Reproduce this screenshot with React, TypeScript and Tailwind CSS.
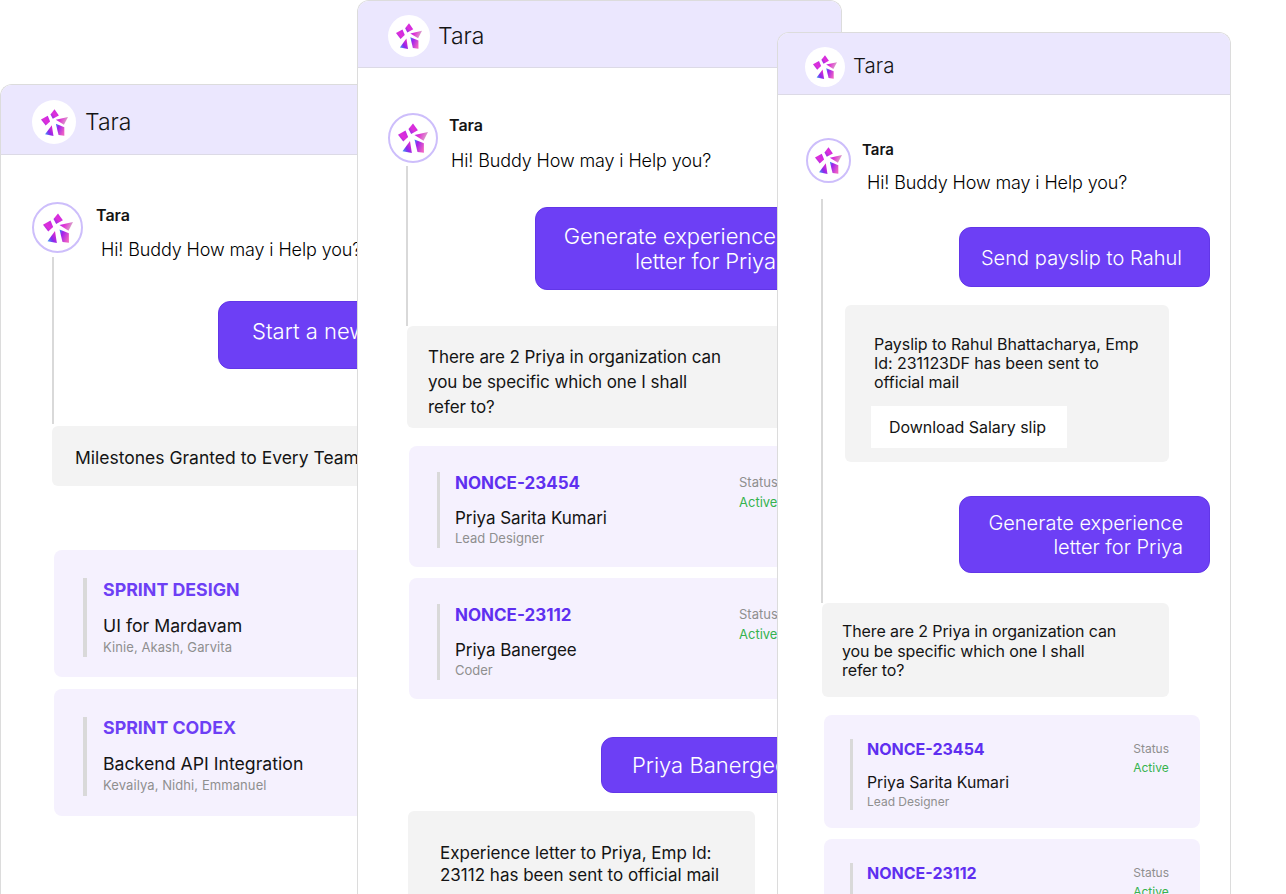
import { useId } from 'react';

function Logo({ size }: { size: number }) {
  const id = useId();
  return (
    <svg width={size} height={size} viewBox="0 0 80 80" fill="none">
      <defs>
        <linearGradient id={id + 'a'} x1="0" y1="0" x2="1" y2="0.3">
          <stop offset="0" stopColor="#a81ef0" />
          <stop offset="0.45" stopColor="#e236d4" />
          <stop offset="1" stopColor="#d8aac8" />
        </linearGradient>
        <linearGradient id={id + 'b'} x1="0" y1="1" x2="1" y2="0.2">
          <stop offset="0" stopColor="#22bdf6" />
          <stop offset="0.45" stopColor="#8a28ee" />
          <stop offset="1" stopColor="#f02cc8" />
        </linearGradient>
        <linearGradient id={id + 'c'} x1="0" y1="0" x2="1" y2="0.6">
          <stop offset="0" stopColor="#2a9cf2" />
          <stop offset="0.35" stopColor="#a020ee" />
          <stop offset="1" stopColor="#ec60c4" />
        </linearGradient>
        <linearGradient id={id + 'd'} x1="1" y1="0" x2="0" y2="1">
          <stop offset="0" stopColor="#c026e8" />
          <stop offset="0.55" stopColor="#e030d8" />
          <stop offset="1" stopColor="#7a2af0" />
        </linearGradient>
      </defs>
      <path d="M28 16 L40 1 L53 19 L35 29 Z" fill={`url(#${id}d)`} />
      <path d="M0 31 L20 20 L27 37 L14 49 Z" fill={`url(#${id}d)`} />
      <path d="M44 32 L80 24 L68 47 Z" fill={`url(#${id}a)`} />
      <path d="M44 44 L69 54 L69 79 L52 77 Z" fill={`url(#${id}c)`} />
      <path d="M32 48 L12 75 L37 80 Z" fill={`url(#${id}b)`} />
    </svg>
  );
}

function Header({ h, circle, logo, nameClass, pl, gap }: { h: string; circle: string; logo: number; nameClass: string; pl: string; gap: string }) {
  return (
    <div className={`flex items-center ${h} ${pl} ${gap} shrink-0 bg-[#ebe7fe] border-b border-[#dcdae6]`}>
      <div className={`flex items-center justify-center rounded-full bg-white ${circle}`}>
        <Logo size={logo} />
      </div>
      <span className={`${nameClass} text-[#141414]`}>Tara</span>
    </div>
  );
}

function Card({ id, name, role, small }: { id: string; name: string; role: string; small?: boolean }) {
  return (
    <div className={small ? 'flex justify-between rounded-lg bg-[#f5f1fe] h-[113px] pl-[26px] pr-[31px] pt-6' : 'flex justify-between rounded-lg bg-[#f5f1fe] h-[121px] pl-7 pr-0 pt-[26px] w-[440px]'}>
      <div className={small ? 'flex flex-col border-l-[3px] border-[#d9d9d9] h-[71px] pl-[14px]' : 'flex flex-col border-l-[3px] border-[#d9d9d9] h-[76px] pl-[15px]'}>
        <div className={small ? 'text-[16px] leading-[20px] font-bold text-[#5f2ff0]' : 'mt-px text-[17px] leading-[20px] font-bold text-[#5f2ff0]'}>{id}</div>
        <div className={small ? 'mt-[14px] text-[15.8px] leading-[20px] text-[#141414]' : 'mt-[15px] text-[17px] tracking-[-0.05px] leading-[20px] text-[#141414]'}>{name}</div>
        <div className={small ? 'text-[12px] leading-[18px] text-[#8f8f8f]' : 'text-[13px] leading-[20px] text-[#8f8f8f]'}>{role}</div>
      </div>
      <div className={small ? 'flex flex-col' : 'flex flex-col ml-auto w-[110px]'}>
        <div className={small ? 'text-[12px] leading-[20px] text-[#8f8f8f]' : 'text-[13px] leading-[20px] text-[#8f8f8f]'}>Status</div>
        <div className={small ? 'text-[12px] leading-[18px] text-[#36b34f]' : 'text-[13px] leading-[20px] text-[#36b34f]'}>Active</div>
      </div>
    </div>
  );
}

function Bubble({ className, children }: { className: string; children: React.ReactNode }) {
  return (
    <div className={`flex items-center justify-end text-right rounded-xl bg-[#6d3ff5] text-white border border-[#6236e8] ${className}`}>
      {children}
    </div>
  );
}

export default function App() {
  return (
    <div className="relative w-[1286px] h-[894px] overflow-hidden bg-white font-['Inter',sans-serif]">
      {/* back window */}
      <section className="absolute left-0 top-[84px] z-0 w-[500px] h-[810px] flex flex-col overflow-hidden rounded-tl-xl border-l border-t border-[#dcdcdc] bg-white">
        <Header h="h-[70px]" circle="w-11 h-11" logo={27} nameClass="text-[23px] font-light" pl="pl-[31px] pt-[5px]" gap="gap-[9px]" />
        <div className="flex flex-col pl-[31px] pt-[47px]">
          <div className="flex">
            <div className="flex items-center justify-center w-[51px] h-[51px] rounded-full border-2 border-[#cdbefb]">
              <Logo size={30} />
            </div>
            <div className="ml-[13px] pt-[3px]">
              <div className="text-[16px] leading-[20px] font-semibold text-[#141414]">Tara</div>
              <div className="ml-[5px] mt-[15px] text-[18px] leading-[20px] font-light tracking-[-0.12px] text-black whitespace-nowrap">Hi! Buddy How may i Help you?</div>
            </div>
          </div>
          <div className="ml-5 -mt-[3px] w-[2px] h-[167px] bg-[#d9d9d9] relative">
            <Bubble className="absolute left-[166px] top-[44px] h-[68px] w-[300px] !justify-start pl-[33px] pb-2 text-[22px] font-light whitespace-nowrap">Start a new Sprint</Bubble>
          </div>
          <div className="ml-5 mt-[2px] flex items-center h-[60px] w-[400px] rounded-md bg-[#f3f3f3] pl-[23px] pt-1 text-[17.5px] text-[#141414] whitespace-nowrap">
            Milestones Granted to Every Team
          </div>
          <div className="ml-[22px] mt-16 flex flex-col gap-3">
            <div className="flex rounded-lg bg-[#f5f1fe] h-[127px] w-[400px] pl-[29px] pt-7">
              <div className="flex flex-col border-l-4 border-[#d9d9d9] h-[79px] pl-[16px]">
                <div className="mt-[2px] text-[17.8px] leading-[20px] font-bold text-[#6d3ff5]">SPRINT DESIGN</div>
                <div className="mt-[16px] text-[17.7px] leading-[20px] text-[#141414]">UI for Mardavam</div>
                <div className="text-[13px] tracking-[0.08px] leading-[22px] text-[#8f8f8f]">Kinie, Akash, Garvita</div>
              </div>
            </div>
            <div className="flex rounded-lg bg-[#f5f1fe] h-[127px] w-[400px] pl-[29px] pt-7">
              <div className="flex flex-col border-l-4 border-[#d9d9d9] h-[79px] pl-[16px]">
                <div className="mt-px text-[17.8px] leading-[20px] font-bold text-[#6d3ff5]">SPRINT CODEX</div>
                <div className="mt-[16px] text-[17.7px] leading-[20px] text-[#141414]">Backend API Integration</div>
                <div className="text-[13px] tracking-[0.08px] leading-[22px] text-[#8f8f8f]">Kevailya, Nidhi, Emmanuel</div>
              </div>
            </div>
          </div>
        </div>
      </section>

      {/* middle window */}
      <section className="absolute left-[357px] top-0 z-10 w-[485px] h-[894px] flex flex-col overflow-hidden rounded-t-xl border-x border-t border-[#dcdcdc] bg-white">
        <Header h="h-[67px]" circle="w-[42px] h-[42px]" logo={26} nameClass="text-[23px] font-light" pl="pl-[30px] pt-1" gap="gap-2" />
        <div className="flex flex-col pl-[30px] pt-[45px]">
          <div className="flex">
            <div className="flex items-center justify-center w-[50px] h-[50px] rounded-full border-2 border-[#cdbefb]">
              <Logo size={30} />
            </div>
            <div className="ml-[11px] pt-[2px]">
              <div className="text-[16px] leading-[20px] font-semibold text-[#141414]">Tara</div>
              <div className="ml-[2px] mt-[16px] text-[18px] leading-[20px] font-light tracking-[-0.12px] text-black whitespace-nowrap">Hi! Buddy How may i Help you?</div>
            </div>
          </div>
          <div className="ml-[18px] -mt-[5px] w-[2px] h-[160px] bg-[#d9d9d9] relative">
            <Bubble className="absolute left-[129px] top-[41px] h-[83px] w-[270px] pr-[28px] text-[22px] tracking-[-0.1px] leading-[25px] font-light">
              <span>Generate experience<br />letter for Priya</span>
            </Bubble>
          </div>
          <div className="ml-[19px] w-[400px] h-[102px] rounded-md bg-[#f3f3f3] pl-[21px] pt-[19px] text-[17px] tracking-[-0.06px] leading-[25px] text-[#141414]">
            There are 2 Priya in organization can<br />you be specific which one I shall<br />refer to?
          </div>
          <div className="ml-[21px] mt-[18px] flex flex-col gap-[11px]">
            <Card id="NONCE-23454" name="Priya Sarita Kumari" role="Lead Designer" />
            <Card id="NONCE-23112" name="Priya Banergee" role="Coder" />
          </div>
          <Bubble className="ml-[213px] mt-[38px] h-[56px] w-[240px] !justify-start pl-[30px] text-[22px] font-light whitespace-nowrap">Priya Banergee</Bubble>
          <div className="ml-5 mt-[18px] w-[347px] h-[120px] rounded-md bg-[#f3f3f3] pl-8 pt-[31px] pr-5 text-[17px] leading-[22px] text-[#141414]">
            Experience letter to Priya, Emp Id: 23112 has been sent to official mail
          </div>
        </div>
      </section>

      {/* front window */}
      <section className="absolute left-[777px] top-[32px] z-20 w-[454px] h-[862px] flex flex-col overflow-hidden rounded-t-xl border-x border-t border-[#dcdcdc] bg-white">
        <Header h="h-[62px]" circle="w-10 h-10" logo={24} nameClass="text-[20.5px] font-light" pl="pl-[27px] pt-[6px]" gap="gap-2" />
        <div className="flex flex-col pl-[28px] pt-[43px]">
          <div className="flex">
            <div className="flex items-center justify-center w-[45px] h-[45px] rounded-full border-2 border-[#cdbefb]">
              <Logo size={27} />
            </div>
            <div className="ml-[11px] pt-[2px]">
              <div className="text-[15px] leading-[20px] font-semibold text-[#141414]">Tara</div>
              <div className="ml-[5px] mt-[13px] text-[18px] leading-[20px] font-light tracking-[-0.12px] text-black whitespace-nowrap">Hi! Buddy How may i Help you?</div>
            </div>
          </div>
          <div className="flex">
            <div className="ml-[15px] mt-[6px] w-[2px] h-[404px] bg-[#d9d9d9] shrink-0" />
            <div className="flex flex-col ml-[22px] mt-[34px]">
              <Bubble className="ml-[114px] h-[60px] w-[251px] !justify-center pr-[6px] pt-px text-[20px] tracking-[0.05px] font-light">Send payslip to Rahul</Bubble>
              <div className="mt-[18px] w-[324px] h-[157px] rounded-md bg-[#f3f3f3] pl-[29px] pt-[30px] text-[16px] tracking-[-0.06px] leading-[19px] text-[#141414]">
                <p>Payslip to Rahul Bhattacharya, Emp<br />Id: 231123DF has been sent to<br />official mail</p>
                <div className="flex items-center mt-[14px] -ml-[3px] w-[196px] h-[42px] bg-white pl-[18px]">Download Salary slip</div>
              </div>
              <Bubble className="ml-[114px] mt-[34px] h-[77px] w-[251px] pr-[26px] text-[20px] leading-[24px] font-light">
                <span>Generate experience<br />letter for Priya</span>
              </Bubble>
            </div>
          </div>
          <div className="ml-[16px] w-[347px] h-[94px] rounded-md bg-[#f3f3f3] pl-5 pt-[19px] text-[16px] tracking-[-0.1px] leading-[19.5px] text-[#141414]">
            There are 2 Priya in organization can<br />you be specific which one I shall<br />refer to?
          </div>
          <div className="ml-[18px] mt-[18px] w-[376px] flex flex-col gap-[11px]">
            <Card small id="NONCE-23454" name="Priya Sarita Kumari" role="Lead Designer" />
            <Card small id="NONCE-23112" name="Priya Banergee" role="Coder" />
          </div>
        </div>
      </section>
    </div>
  );
}
